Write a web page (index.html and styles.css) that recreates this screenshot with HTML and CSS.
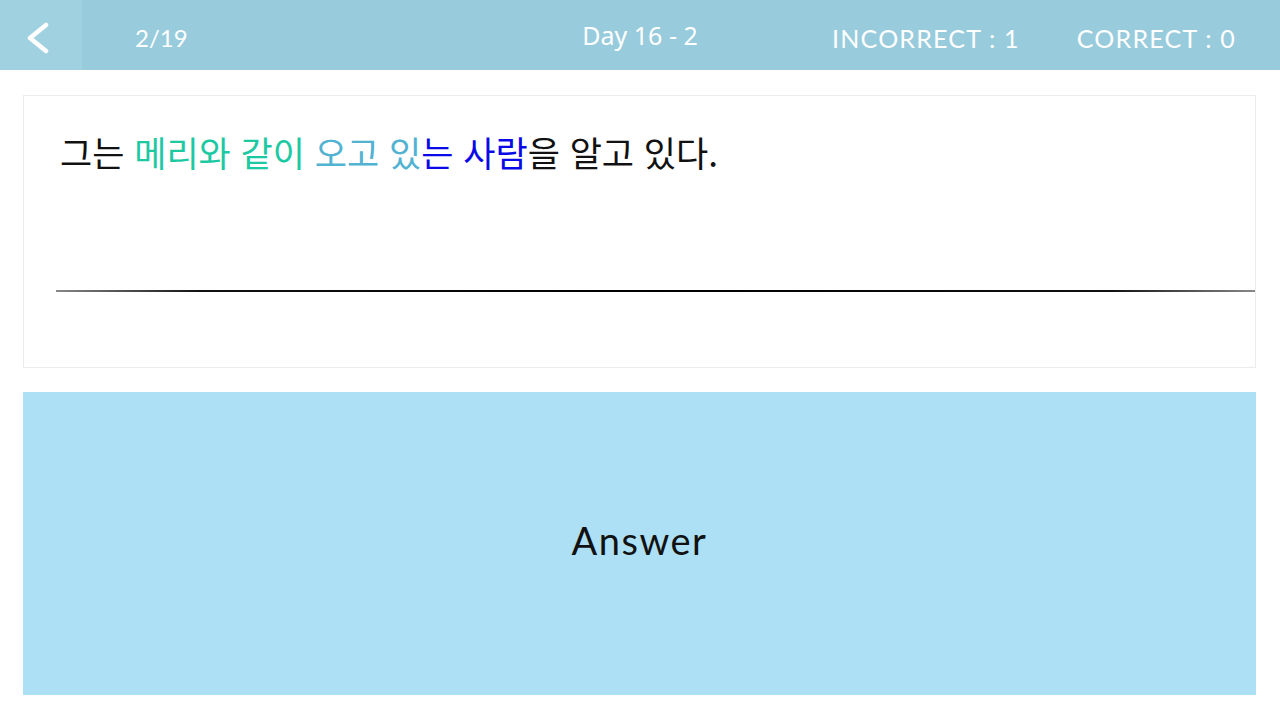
FILE: index.html
```html
<!DOCTYPE html>
<html lang="ko">
<head>
<meta charset="utf-8">
<link rel="stylesheet" href="styles.css">
</head>
<body>
<header class="topbar">
  <div class="back">
    <svg width="26" height="32" viewBox="0 0 26 32"><path d="M21 3 L5 16 L21 29" fill="none" stroke="#fff" stroke-width="4.5" stroke-linecap="round" stroke-linejoin="round"/></svg>
  </div>
  <div class="count">2/19</div>
  <div class="title">Day 16 - 2</div>
  <div class="score">
    <span class="incorrect">INCORRECT : 1</span>
    <span class="correct">CORRECT : 0</span>
  </div>
</header>
<main class="content">
  <section class="card">
    <p class="sentence">그는 <span class="c1">메리와 같이</span> <span class="c2">오고 있</span><span class="c3">는 사람</span>을 알고 있다.</p>
    <div class="rule"></div>
  </section>
  <section class="answer">Answer</section>
</main>
</body>
</html>
```
FILE: styles.css
```css
* { box-sizing: border-box; }
html, body { margin: 0; padding: 0; }
body {
  width: 1280px;
  height: 720px;
  background: #fff;
  font-family: "Noto Sans CJK KR", "Noto Sans", sans-serif;
  overflow: hidden;
}
.topbar {
  height: 70px;
  background: #98cbdc;
  display: flex;
  align-items: center;
  color: #fff;
  position: relative;
}
.back {
  width: 82px;
  height: 70px;
  background: #9fd1e0;
  display: flex;
  align-items: center;
  padding-left: 25px;
  padding-top: 5px;
}
.count {
  font-family: "Lato", sans-serif;
  font-size: 24px;
  margin-left: 53px;
  margin-top: 4px;
}
.title {
  position: absolute;
  left: 0;
  right: 0;
  top: 18px;
  text-align: center;
  font-family: "Noto Sans", sans-serif;
  font-size: 25px;
  line-height: 34px;
  pointer-events: none;
}
.score {
  margin-left: auto;
  display: flex;
  gap: 57px;
  padding-right: 44px;
  font-family: "Lato", sans-serif;
  font-size: 25px;
  letter-spacing: 1.2px;
  margin-top: 6px;
}
.content {
  padding: 25px 24px 0 23px;
  display: flex;
  flex-direction: column;
  gap: 24px;
}
.card {
  height: 273px;
  border: 1px solid #ececec;
  display: flex;
  flex-direction: column;
  padding: 0 0 0 32px;
}
.sentence {
  margin: 26px 0 0 4px;
  font-size: 35px;
  line-height: 60px;
  color: #111;
}
.c1 { color: #1cc9a2; }
.c2 { color: #52b2d2; }
.c3 { color: #0a0ae8; }
.rule {
  margin-top: 108px;
  height: 2px;
  background: linear-gradient(to right, #888 0, #111 12%, #000 50%, #111 88%, #888 100%);
}
.answer {
  height: 303px;
  background: #aee0f5;
  display: flex;
  align-items: center;
  justify-content: center;
  padding-bottom: 8px;
  font-family: "Lato", sans-serif;
  font-size: 38px;
  color: #111;
  letter-spacing: 1.5px;
}
```
